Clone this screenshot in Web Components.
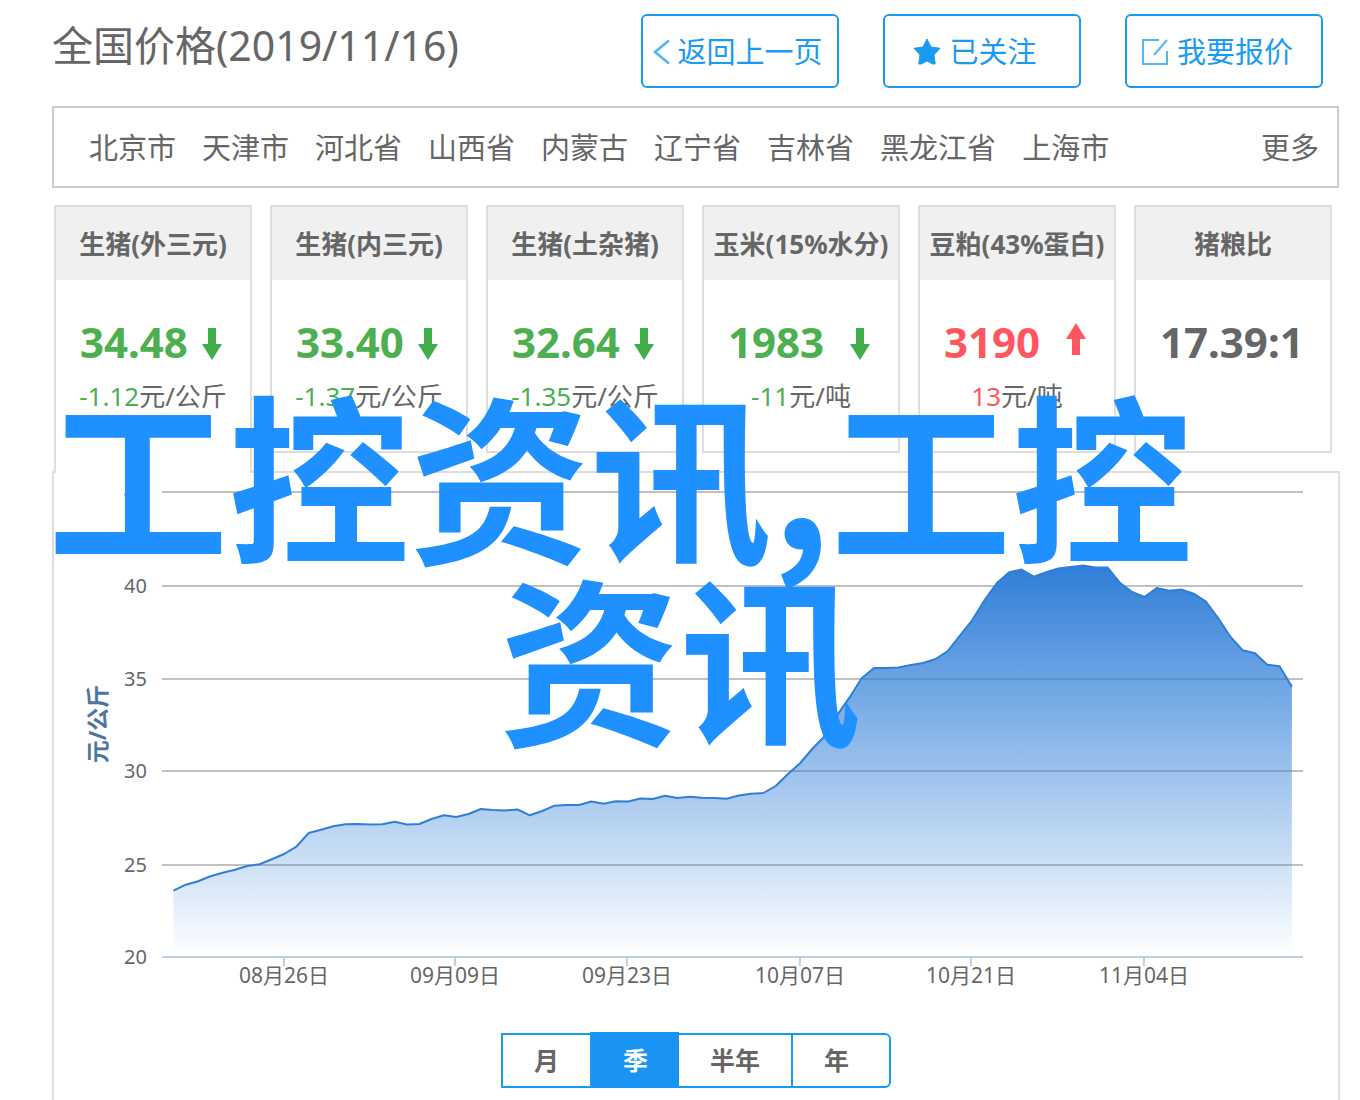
<!DOCTYPE html>
<html lang="zh-CN">
<head>
<meta charset="utf-8">
<title>全国价格</title>
<style>
  html { background: #fff; }
  body {
    margin: 0;
    color: #666;
    font-family: "Noto Sans", "Noto Sans CJK SC", sans-serif;
    --blue: #1a9bf2;
    --line: #dedede;
    --up: #ff5660;
    --down: #4caf50;
  }
</style>
</head>
<body>
<price-page>
  <page-header slot="header" heading="全国价格(2019/11/16)">
    <action-button icon="back">返回上一页</action-button>
    <action-button icon="star">已关注</action-button>
    <action-button icon="edit">我要报价</action-button>
  </page-header>
  <region-nav slot="regions" regions="北京市,天津市,河北省,山西省,内蒙古,辽宁省,吉林省,黑龙江省,上海市" more="更多"></region-nav>
  <price-card active name="生猪(外三元)" value="34.48" trend="down" delta="-1.12" unit="元/公斤"></price-card>
  <price-card name="生猪(内三元)" value="33.40" trend="down" delta="-1.37" unit="元/公斤"></price-card>
  <price-card name="生猪(土杂猪)" value="32.64" trend="down" delta="-1.35" unit="元/公斤"></price-card>
  <price-card name="玉米(15%水分)" value="1983" trend="down" delta="-11" unit="元/吨"></price-card>
  <price-card name="豆粕(43%蛋白)" value="3190" trend="up" delta="13" unit="元/吨"></price-card>
  <price-card name="猪粮比" value="17.39:1"></price-card>
  <price-chart slot="chart"></price-chart>
  <range-tabs slot="ranges"></range-tabs>
  <banner-text slot="banner"><span>工控资讯,工控</span><span>资讯</span></banner-text>
</price-page>

<script>
class BaseElement extends HTMLElement {
  connectedCallback() {
    if (this.shadowRoot) return;
    this.attachShadow({ mode: "open" }).innerHTML = this.render();
    this.ready();
  }
  ready() {}
  attr(name) { return this.getAttribute(name) || ""; }
}

customElements.define("price-page", class extends BaseElement {
  render() {
    return `
      <style>
        :host { display: block; position: relative; padding: 14px 20px 0 52px; }
        .cards { display: grid; grid-template-columns: repeat(6, minmax(0, 1fr)); gap: 18px; padding: 17px 8px 0 2px; }
        .panel { margin-top: 18px; padding-bottom: 12px; border: 2px solid var(--line); border-bottom: 0; }
        .ranges { display: flex; justify-content: center; padding-top: 20px; }
      </style>
      <slot name="header"></slot>
      <slot name="regions"></slot>
      <section class="cards"><slot></slot></section>
      <section class="panel">
        <slot name="chart"></slot>
        <div class="ranges"><slot name="ranges"></slot></div>
      </section>
      <slot name="banner"></slot>`;
  }
});

customElements.define("page-header", class extends BaseElement {
  render() {
    return `
      <style>
        :host { display: flex; justify-content: space-between; align-items: flex-start; padding-right: 17px; }
        h1 { margin: 0; font-size: 41px; font-weight: 400; line-height: 62px; white-space: nowrap; }
        .actions { display: flex; gap: 44px; }
      </style>
      <h1>${this.attr("heading")}</h1>
      <div class="actions"><slot></slot></div>`;
  }
});

const ICONS = {
  back: `<svg width="18" height="26" viewBox="0 0 18 26"><path d="M16 1.500 2 13 16 24.500" fill="none" stroke="#4fb3f6" stroke-width="2.600"/></svg>`,
  star: `<svg width="28" height="28" viewBox="0 0 28 28"><path d="M14 1l4 8 9 1.300-6 6.500 1.200 9.200h-2.400L14 23l-5.800 3H5.800L7 16.800l-6-6.500L10 9z" fill="#1a9bf2" stroke="#1a9bf2" stroke-linejoin="round"/></svg>`,
  edit: `<svg width="28" height="28" viewBox="0 0 28 28" fill="none" stroke="#53b5f6" stroke-width="2"><path d="M18 2H2v24h24V13"/><path d="M26 2 13 17"/></svg>`
};

customElements.define("action-button", class extends BaseElement {
  render() {
    return `
      <style>
        :host { display: block; width: 198px; }
        button {
          display: flex; align-items: center; justify-content: center; gap: 8px;
          box-sizing: border-box; width: 100%; height: 74px; padding: 2px 14px 0 0;
          border: 2px solid var(--blue); border-radius: 6px; background: #fff;
          color: var(--blue); font: inherit; font-size: 29px; line-height: 40px; white-space: nowrap;
        }
        :host([icon="back"]) button { padding-right: 4px; gap: 6px; }
        svg { flex: none; }
      </style>
      <button type="button">${ICONS[this.attr("icon")]}<span><slot></slot></span></button>`;
  }
});

customElements.define("region-nav", class extends BaseElement {
  render() {
    const links = this.attr("regions").split(",").map(r => `<a href="#">${r}</a>`).join("");
    return `
      <style>
        :host { display: block; margin: 18px 1px 0 0; }
        nav { display: flex; align-items: center; gap: 26px; padding: 20px 18px 18px 35px; border: 2px solid #ccc; }
        a { color: inherit; text-decoration: none; font-size: 29px; line-height: 40px; white-space: nowrap; }
        .more { margin-left: auto; }
      </style>
      <nav>${links}<a class="more" href="#">${this.attr("more")}</a></nav>`;
  }
});

customElements.define("price-card", class extends BaseElement {
  render() {
    const trend = this.attr("trend");
    const arrow = trend ? `<svg class="${trend}" width="22" height="34" viewBox="0 0 22 34"><path d="M7 1h8v16h6L11 33 1 17h6z" fill="currentColor"/></svg>` : "";
    const delta = trend ? `<p><span class="${trend}">${this.attr("delta")}</span>${this.attr("unit")}</p>` : "";
    return `
      <style>
        :host { display: block; box-sizing: border-box; height: 248px; border: 2px solid var(--line); background: #fff; }
        :host([active]) { position: relative; height: 268px; margin-bottom: -20px; border-bottom: 0; }
        h2 { margin: 0; padding-top: 1px; background: #f0f0f0; font-size: 26px; line-height: 72px; text-align: center; white-space: nowrap; }
        .value { display: flex; justify-content: space-between; align-items: center; margin: 32px 27px 0 24px; height: 60px; }
        strong { font-size: 42px; line-height: 60px; white-space: nowrap; }
        p { margin: 6px 0 0; font-size: 26px; line-height: 36px; text-align: center; white-space: nowrap; }
        svg { flex: none; }
        .up { color: var(--up); }
        .down { color: var(--down); }
        svg.up { transform: rotate(180deg); margin-bottom: 6px; }
        svg.down { color: #3fae49; margin-top: 4px; }
      </style>
      <h2>${this.attr("name")}</h2>
      <div class="value"><strong class="${trend}">${this.attr("value")}</strong>${arrow}</div>
      ${delta}`;
  }
});

const SERIES = [
  890.7, 884.7, 881.3, 876.3, 872.7, 869.7, 866, 864.3, 859.3, 854, 846.7, 833, 829.7, 826.3, 824.3,
  824, 824.5, 824.3, 821.7, 824.5, 824, 819, 815.3, 817, 814, 809, 810, 810.5, 809.5, 815.3,
  811, 805.7, 805, 805, 801.5, 803.7, 801.3, 801.5, 798.5, 799, 795.7, 798, 796.7, 797.7, 798,
  798.7, 795.5, 793.7, 793, 786, 774, 763, 748.5, 736, 715, 697.7, 678.3, 668, 668, 667.5,
  665, 663, 659, 651, 635.3, 620, 600, 583, 572.3, 569.5, 576.7, 572.3, 568.5, 567, 565.5,
  567.5, 567.5, 582.7, 592, 597, 588, 590.7, 589.5, 593.7, 601.7, 618, 636.7, 650.3, 653.3, 664.7,
  666.3, 686.7
];

customElements.define("price-chart", class extends BaseElement {
  render() {
    const points = SERIES.map((y, i) => `${(173.5 + i * 12.29).toFixed(1)},${y}`).join(" ");
    const rows = [[45, 492], [40, 586], [35, 679], [30, 771], [25, 865], [20, 957]];
    const days = [["08月26日", 284], ["09月09日", 455], ["09月23日", 627], ["10月07日", 800], ["10月21日", 971], ["11月04日", 1144]];
    return `
      <style>
        :host { display: block; }
        svg { display: block; width: 100%; height: auto; }
        text { font-size: 20px; fill: #666; }
        .day { font-size: 21px; }
        .axis { font-size: 23px; font-weight: 700; fill: #4d759e; }
      </style>
      <svg viewBox="54 473 1284 540" role="img" aria-label="价格走势">
        <defs>
          <linearGradient id="fill" x1="0" y1="565" x2="0" y2="957" gradientUnits="userSpaceOnUse">
            <stop offset="0" stop-color="#2f7ed8"/>
            <stop offset="1" stop-color="#2f7ed8" stop-opacity="0"/>
          </linearGradient>
        </defs>
        ${rows.map(([v, y]) => `<path d="M162 ${y}H1303" stroke="${v === 20 ? "#c0d0e0" : "#c0c0c0"}" stroke-width="2"/><text x="147" y="${y + 7}" text-anchor="end">${v}</text>`).join("")}
        ${days.map(([d, x]) => `<path d="M${x} 957v9" stroke="#c0d0e0" stroke-width="2"/><text class="day" x="${x}" y="983" text-anchor="middle">${d}</text>`).join("")}
        <polygon points="173.5,957 ${points} 1291.9,957" fill="url(#fill)"/>
        <polyline points="${points}" fill="none" stroke="#2f7ed8" stroke-width="2" stroke-linejoin="round"/>
        <text class="axis" transform="translate(106 724) rotate(-90)" text-anchor="middle">元/公斤</text>
      </svg>`;
  }
});

customElements.define("range-tabs", class extends BaseElement {
  render() {
    return `
      <style>
        :host { display: block; }
        div { display: flex; height: 51px; border: 2px solid var(--blue); border-radius: 0 6px 6px 0; }
        button {
          padding: 0 31px; border: 0; background: none; color: inherit;
          font: inherit; font-size: 25px; font-weight: 700; line-height: 51px;
        }
        button + button { border-left: 2px solid var(--blue); }
        button:last-child { padding-right: 40px; }
        button[aria-pressed="true"] { margin: -3px 0 -2px; background: #1a94f2; color: #fff; line-height: 56px; }
        button[aria-pressed="true"] + button { border-left: 0; }
      </style>
      <div role="group" aria-label="时间范围">
        <button type="button" aria-pressed="false">月</button>
        <button type="button" aria-pressed="true">季</button>
        <button type="button" aria-pressed="false">半年</button>
        <button type="button" aria-pressed="false">年</button>
      </div>`;
  }
  ready() {
    const buttons = [...this.shadowRoot.querySelectorAll("button")];
    buttons.forEach(b => b.addEventListener("click", () => {
      buttons.forEach(o => o.setAttribute("aria-pressed", String(o === b)));
    }));
  }
});

customElements.define("banner-text", class extends BaseElement {
  render() {
    return `
      <style>
        :host {
          position: absolute; z-index: 2; top: 380px; left: 0; right: 0;
          display: flex; flex-direction: column; align-items: center; pointer-events: none;
          color: #1e90ff; font-family: "Noto Sans CJK SC", sans-serif;
          font-size: 181px; font-weight: 700; line-height: 182px; white-space: nowrap;
        }
        ::slotted(span:first-child) { padding-right: 120px; }
      </style>
      <slot></slot>`;
  }
});
</script>
</body>
</html>
